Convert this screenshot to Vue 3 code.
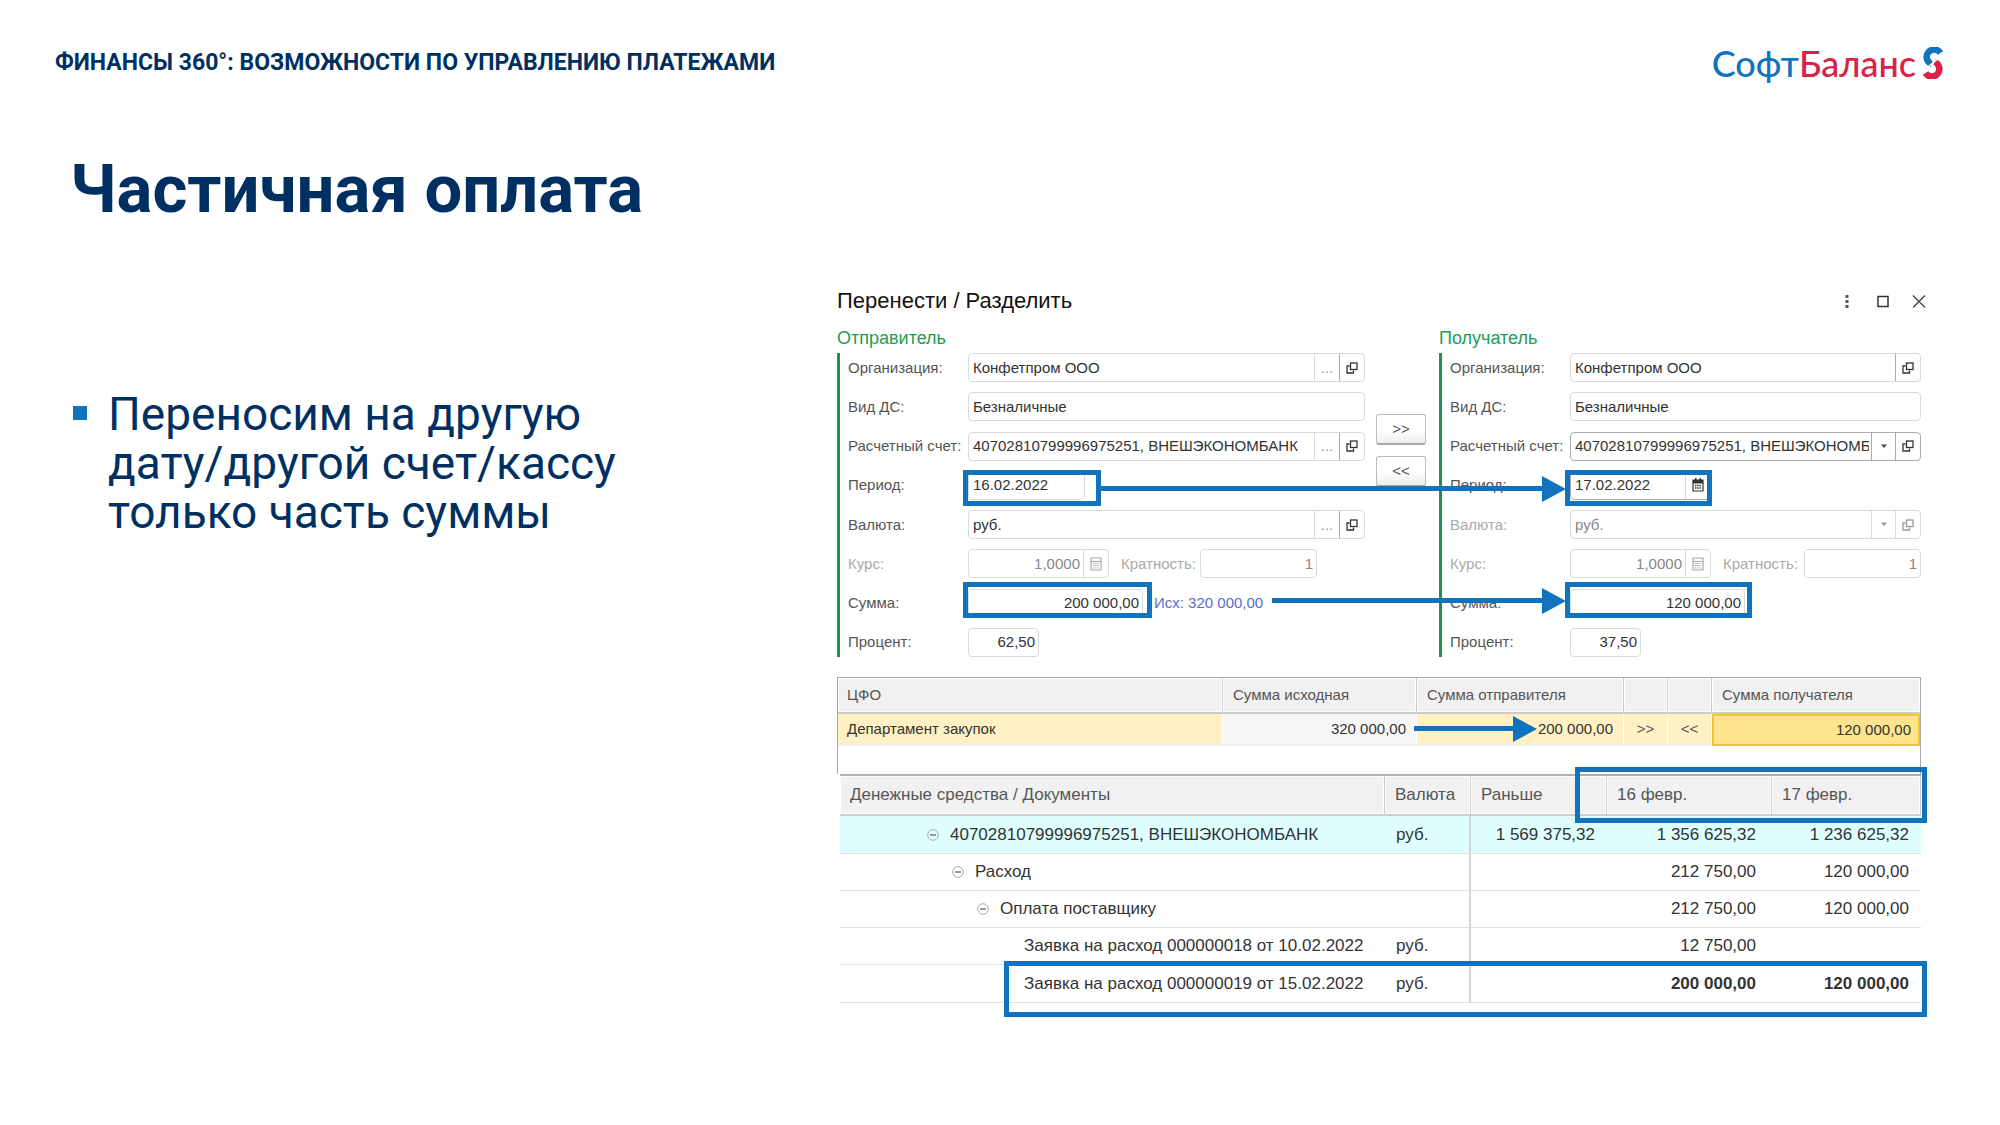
<script setup>
import { ref } from 'vue'

const account = '40702810799996975251, ВНЕШЭКОНОМБАНК'

const sides = ref([
  {
    id: 'from', title: 'Отправитель',
    rows: [
      { label: 'Организация:', kind: 'lookup', value: 'Конфетпром ООО', dots: true },
      { label: 'Вид ДС:', kind: 'text', value: 'Безналичные' },
      { label: 'Расчетный счет:', kind: 'lookup', value: account, dots: true },
      { label: 'Период:', kind: 'date', value: '16.02.2022' },
      { label: 'Валюта:', kind: 'lookup', value: 'руб.', dots: true },
      { label: 'Курс:', kind: 'rate', value: '1,0000', off: true },
      { label: 'Сумма:', kind: 'sum', value: '200 000,00', note: 'Исх: 320 000,00' },
      { label: 'Процент:', kind: 'percent', value: '62,50' }
    ]
  },
  {
    id: 'to', title: 'Получатель',
    rows: [
      { label: 'Организация:', kind: 'lookup', value: 'Конфетпром ООО' },
      { label: 'Вид ДС:', kind: 'text', value: 'Безналичные' },
      { label: 'Расчетный счет:', kind: 'select', value: account, strong: true },
      { label: 'Период:', kind: 'date', value: '17.02.2022', calendar: true, strong: true },
      { label: 'Валюта:', kind: 'select', value: 'руб.', off: true },
      { label: 'Курс:', kind: 'rate', value: '1,0000', off: true },
      { label: 'Сумма:', kind: 'sum', value: '120 000,00' },
      { label: 'Процент:', kind: 'percent', value: '37,50' }
    ]
  }
])

const docs = [
  { name: account, level: 0, fold: true, cur: 'руб.', before: '1 569 375,32', d16: '1 356 625,32', d17: '1 236 625,32', tint: true },
  { name: 'Расход', level: 1, fold: true, cur: '', before: '', d16: '212 750,00', d17: '120 000,00' },
  { name: 'Оплата поставщику', level: 2, fold: true, cur: '', before: '', d16: '212 750,00', d17: '120 000,00' },
  { name: 'Заявка на расход 000000018 от 10.02.2022', level: 3, cur: 'руб.', before: '', d16: '12 750,00', d17: '' },
  { name: 'Заявка на расход 000000019 от 15.02.2022', level: 3, cur: 'руб.', before: '', d16: '200 000,00', d17: '120 000,00', bold: true }
]
</script>

<template>
  <main class="slide">
    <header class="top">
      <p class="topic">ФИНАНСЫ 360°: ВОЗМОЖНОСТИ ПО УПРАВЛЕНИЮ ПЛАТЕЖАМИ</p>
      <div class="logo">
        <span class="soft">Софт</span><span class="balance">Баланс</span>
        <svg class="mark" width="22" height="32" viewBox="0 0 22 32" aria-hidden="true">
          <path d="M18.500 6A7.500 7.500 0 1 0 9.500 17" fill="none" stroke="#1173bd" stroke-width="6.500" />
          <path d="M3.500 26A7.500 7.500 0 1 0 12.500 15" fill="none" stroke="#dc2148" stroke-width="6.500" />
          <path d="M5 20.500L17 11" stroke="#fff" stroke-width="1.300" />
        </svg>
      </div>
    </header>

    <h1>Частичная оплата</h1>

    <div class="content">
      <ul class="points">
        <li>Переносим на другую дату/другой счет/кассу только часть суммы</li>
      </ul>

      <section class="dialog">
        <div class="bar">
          <h2>Перенести / Разделить</h2>
          <div class="tools">
            <button type="button" aria-label="Ещё">
              <svg width="16" height="16" viewBox="0 0 16 16"><path d="M6.500 2h3v3h-3zM6.500 7h3v3h-3zM6.500 12h3v3h-3z" fill="#555" /></svg>
            </button>
            <button type="button" aria-label="Развернуть">
              <svg width="16" height="16" viewBox="0 0 16 16"><rect x="3" y="3.500" width="10" height="10" fill="none" stroke="#333" stroke-width="1.500" /></svg>
            </button>
            <button type="button" aria-label="Закрыть">
              <svg width="16" height="16" viewBox="0 0 16 16"><path d="M2 2.500l12 12M14 2.500l-12 12" stroke="#444" stroke-width="1.300" /></svg>
            </button>
          </div>
        </div>

        <form class="form" @submit.prevent>
          <section v-for="side in sides" :key="side.id" class="side" :class="side.id">
            <h3>{{ side.title }}</h3>
            <div class="rows">
              <div v-for="(row, i) in side.rows" :key="row.label" class="row" :class="{ off: row.off }">
                <label :for="side.id + i">{{ row.label }}</label>
                <div class="mark-box" :class="[row.kind, { framed: row.kind === 'date' || row.kind === 'sum' }]">
                  <div class="field" :class="{ strong: row.strong }">
                    <select v-if="row.kind === 'select'" :id="side.id + i" :disabled="row.off">
                      <option>{{ row.value }}</option>
                    </select>
                    <input v-else :id="side.id + i" v-model="row.value" type="text" :disabled="row.off" />
                    <span v-if="row.kind === 'select'" class="caret" aria-hidden="true">
                      <svg width="8" height="5" viewBox="0 0 8 5"><path d="M1 0.500h6L4 4z" fill="currentColor" /></svg>
                    </span>
                    <button v-if="row.dots" type="button" class="cell dots">...</button>
                    <button v-if="row.kind === 'lookup' || row.kind === 'select'" type="button" class="cell open" :disabled="row.off" aria-label="Открыть">
                      <svg width="12" height="12" viewBox="0 0 12 12" fill="none" stroke="currentColor" stroke-width="1.300">
                        <rect x="4.500" y="1" width="6.500" height="6.500" /><path d="M3.500 4H1v7h6.500V8.500" />
                      </svg>
                    </button>
                    <button v-if="row.calendar" type="button" class="cell" aria-label="Календарь">
                      <svg width="12" height="14" viewBox="0 0 12 14">
                        <path d="M1 2h10v11H1z" fill="#fff" stroke="#333" stroke-width="1.200" />
                        <path d="M1 2h10v3.500H1zM3 0h1.500v2H3zM7.500 0H9v2H7.500z" fill="#333" />
                        <path d="M3 7.500h6M3 10h6" stroke="#333" stroke-width="1.300" stroke-dasharray="1.500 .7" />
                      </svg>
                    </button>
                    <button v-if="row.kind === 'rate'" type="button" class="cell" disabled aria-label="Калькулятор">
                      <svg width="12" height="14" viewBox="0 0 12 14">
                        <path d="M1 1h10v12H1zM1 4.500h10" fill="none" stroke="#aaa" stroke-width="1.200" />
                        <path d="M3 6.500h6M3 8.700h6M3 11h6" stroke="#aaa" stroke-width="1.200" stroke-dasharray="1.300 .9" />
                      </svg>
                    </button>
                  </div>
                </div>
                <span v-if="row.note" class="note">{{ row.note }}</span>
                <template v-if="row.kind === 'rate'">
                  <label class="ratio-label" :for="side.id + 'ratio'">Кратность:</label>
                  <div class="field ratio"><input :id="side.id + 'ratio'" type="text" value="1" disabled /></div>
                </template>
              </div>
            </div>
          </section>
          <div class="moves">
            <button type="button">&gt;&gt;</button>
            <button type="button">&lt;&lt;</button>
          </div>
          <span class="arrow period" aria-hidden="true"></span>
          <span class="arrow amount" aria-hidden="true"></span>
        </form>

        <div class="split">
          <table>
            <colgroup><col /><col class="w194" /><col class="w207" /><col class="w44" /><col class="w44" /><col class="w208" /></colgroup>
            <thead>
              <tr><th>ЦФО</th><th>Сумма исходная</th><th>Сумма отправителя</th><th></th><th></th><th>Сумма получателя</th></tr>
            </thead>
            <tbody>
              <tr>
                <td>Департамент закупок</td>
                <td class="num source">320 000,00</td>
                <td class="num sender">200 000,00<span class="arrow" aria-hidden="true"></span></td>
                <td class="mid">&gt;&gt;</td>
                <td class="mid">&lt;&lt;</td>
                <td class="num current">120 000,00</td>
              </tr>
            </tbody>
          </table>
        </div>

        <div class="docs">
          <table>
            <colgroup><col /><col class="w86" /><col class="w136" /><col class="w165" /><col class="w149" /></colgroup>
            <thead>
              <tr><th>Денежные средства / Документы</th><th>Валюта</th><th>Раньше</th><th>16 февр.</th><th>17 февр.</th></tr>
            </thead>
            <tbody>
              <tr v-for="d in docs" :key="d.name" :class="{ tint: d.tint, bold: d.bold }">
                <td>
                  <div class="tree" :class="'l' + d.level">
                    <button v-if="d.fold" type="button" aria-label="Свернуть">
                      <svg width="12" height="12" viewBox="0 0 12 12" fill="none">
                        <circle cx="6" cy="6" r="5.300" stroke="#aaa" /><path d="M3 6h6" stroke="#555" stroke-width="1.200" />
                      </svg>
                    </button>
                    <span>{{ d.name }}</span>
                  </div>
                </td>
                <td>{{ d.cur }}</td>
                <td class="num">{{ d.before }}</td>
                <td class="num d16">{{ d.d16 }}</td>
                <td class="num">{{ d.d17 }}</td>
              </tr>
            </tbody>
          </table>
          <span class="frame days" aria-hidden="true"></span>
          <span class="frame request" aria-hidden="true"></span>
        </div>
      </section>
    </div>
  </main>
</template>

<style>
body {
  margin: 0;
  background: #fff;
}
</style>

<style scoped>
.slide {
  --navy: #002f62;
  --blue: #1173bd;
  --line: #dadada;
  padding: 40px 55px 109px;
  font-family: Roboto, "Noto Sans", sans-serif;
  color: var(--navy);
}
.slide *, .slide *::after, .slide *::before { box-sizing: border-box; }
h1, h2, h3, p, ul { margin: 0; padding: 0; }
button, input, select { font: inherit; color: inherit; margin: 0; }
button { padding: 0; border: 0; background: none; }
svg { display: block; }

.top { display: flex; justify-content: space-between; }
.topic { font-size: 23px; line-height: 46px; font-weight: 700; }
.logo {
  display: flex;
  align-items: center;
  font: 500 36px/46px Lato, "Noto Sans", sans-serif;
}
.soft { color: var(--blue); }
.balance { color: #dc2148; }
.mark { margin: 0 1px 0 6px; }

h1 { margin: 63px 0 0 15px; font-size: 67px; line-height: 80px; font-weight: 700; }

.content {
  display: grid;
  grid-template-columns: minmax(0, 1fr) minmax(0, 1084px);
  margin: 58px 24px 0 18px;
}
.points { margin-top: 103px; list-style: none; font-size: 46px; line-height: 49px; }
.points li { display: flex; max-width: 560px; }
.points li::before {
  content: "";
  flex: none;
  width: 14px;
  height: 14px;
  margin: 16px 21px 0 0;
  background: var(--blue);
}

.dialog { font: 15px/20px "Liberation Sans", Arial, sans-serif; color: #444; }
.bar { display: flex; justify-content: space-between; align-items: center; }
h2 { font-size: 22px; line-height: 28px; font-weight: 400; color: #111; }
.tools { display: flex; gap: 20px; margin-right: -6px; }

.form {
  position: relative;
  display: grid;
  grid-template-columns: minmax(0, 1fr) 50px 482px;
  gap: 12px;
  margin-top: 13px;
}
.side { grid-row: 1; }
.from { grid-column: 1; }
.to { grid-column: 3; }
h3 { margin-bottom: 5px; font-size: 18px; line-height: 20px; font-weight: 400; color: #1c9d55; }
.rows {
  display: flex;
  flex-direction: column;
  justify-content: space-between;
  min-height: 304px;
  border-left: 3px solid #1c9150;
  padding-left: 8px;
}
.row { display: flex; align-items: center; height: 29px; }
.row > label:first-child { flex: none; width: 120px; white-space: nowrap; color: #555; }
.row.off > label:first-child, .row.off .ratio-label { color: #aaa; }
.mark-box { position: relative; flex: none; }
.mark-box.lookup, .mark-box.text, .mark-box.select { flex: 1; min-width: 0; }
.field {
  position: relative;
  display: flex;
  height: 29px;
  border: 1px solid var(--line);
  border-radius: 4px;
  background: #fff;
}
.field.strong { border-color: #aaa; }
.field input, .field select {
  flex: 1;
  width: 0;
  min-width: 0;
  padding: 0 4px;
  border: 0;
  background: none;
  color: #333;
  appearance: none;
  outline: 0;
}
.off .field input, .off .field select { color: #888; opacity: 1; }
.field select { padding-right: 26px; }
.cell {
  flex: none;
  display: grid;
  place-items: center;
  width: 25px;
  border-left: 1px solid var(--line);
  color: #333;
}
.cell.open { border-left-color: #aaa; }
.cell.dots { color: #999; }
.off .cell { color: #999; border-left-color: var(--line); }
.caret {
  position: absolute;
  top: 0;
  bottom: 0;
  right: 25px;
  width: 24px;
  display: grid;
  place-items: center;
  border-left: 1px solid #aaa;
  color: #444;
  pointer-events: none;
}
.off .caret { border-left-color: var(--line); color: #999; }
.from .date { width: 117px; }
.to .date { width: 141px; }
.rate { width: 141px; }
.sum { width: 175px; }
.percent { width: 71px; }
.rate input, .sum input, .percent input, .ratio input { text-align: right; padding-right: 3px; }
.ratio-label { margin-left: 12px; }
.ratio { width: 117px; margin-left: auto; }
.from .ratio { margin-right: 48px; }
.note { margin-left: 11px; color: #5b6cc9; white-space: nowrap; }
.framed::after {
  content: "";
  position: absolute;
  inset: -1px -9px -6px -5px;
  border: 5px solid var(--blue);
}
.sum.framed::after { top: -7px; bottom: 0; }
.from .date.framed::after { right: -16px; }
.to .date.framed::after { right: -1px; left: -5px; }
.to .sum.framed::after { right: -7px; left: -5px; }

.moves { grid-column: 2; grid-row: 1; display: flex; flex-direction: column; gap: 11px; padding-top: 86px; margin-left: -1px; margin-right: 1px; }
.moves button {
  height: 31px;
  border: 1px solid #bbb;
  border-bottom: 2px solid #aaa;
  border-radius: 3px;
  background: linear-gradient(#fff 50%, #eee);
  color: #555;
}

.arrow { position: absolute; height: 5px; background: linear-gradient(var(--blue), var(--blue)) left / calc(100% - 20px) 100% no-repeat; }
.arrow::after {
  content: "";
  position: absolute;
  right: 0;
  top: -10px;
  border: solid transparent;
  border-width: 13px 0 13px 24px;
  border-left-color: var(--blue);
}
.arrow.period { left: 263px; right: 355px; top: 158px; }
.arrow.amount { left: 435px; right: 355px; top: 270px; }

table { width: 100%; border-collapse: separate; border-spacing: 0; table-layout: fixed; }
th { text-align: left; font-weight: 400; color: #555; background: #f1f1f1; }
th, td { white-space: nowrap; padding: 0 10px; }
td { color: #333; }
.num { text-align: right; }
.w44 { width: 44px; }
.w86 { width: 86px; }
.w136 { width: 136px; }
.w149 { width: 149px; }
.w165 { width: 165px; }
.w194 { width: 194px; }
.w207 { width: 207px; }
.w208 { width: 208px; }

.split { margin-top: 20px; padding-bottom: 28px; border: 1px solid #a8a8a8; border-bottom: 0; }
.split th { height: 36px; border-right: 1px solid #ccc; border-bottom: 2px solid #ccc; box-shadow: inset 0 0 0 1px #fff; }
.split td { height: 32px; border-right: 1px solid #fff; border-bottom: 2px solid #eee; background: #fff1c4; }
.split th:last-child, .split td:last-child { border-right: 0; }
.split td:first-child, .split th:first-child { padding-left: 9px; }
.split td.source { background: #f6f6f6; }
.split .sender { position: relative; }
.sender .arrow { left: -3px; top: 12px; width: 123px; }
.split .mid { padding: 0; text-align: center; color: #555; }
.split td.current { padding-right: 7px; border: 2px solid #f0c52c; background: #ffe48d; }

.docs { position: relative; margin-left: 3px; border-top: 2px solid #b0b0b0; font-size: 17px; }
.docs th { height: 40px; padding-left: 10px; border-right: 1px solid #ccc; border-bottom: 2px solid #ccc; box-shadow: inset 0 0 0 1px #fff; }
.docs td { height: 37px; padding-left: 11px; padding-right: 12px; border-bottom: 1px solid #e2e2e2; }
.docs td:nth-child(2) { border-right: 2px solid #d4d4d4; }
.docs td.d16 { padding-right: 16px; }
.docs .tint td { height: 38px; background: #dfffff; }
.docs .bold td { height: 38px; }
.bold .num { font-weight: 700; }
.tree { display: flex; align-items: center; gap: 11px; }
.l0 { padding-left: 76px; }
.l1 { padding-left: 101px; }
.l2 { padding-left: 126px; }
.l3 { padding-left: 173px; }
.frame { position: absolute; right: -6px; border: 5px solid var(--blue); }
.frame.days { top: -9px; width: 352px; height: 56px; }
.frame.request { bottom: -14px; width: 923px; height: 56px; }
</style>
